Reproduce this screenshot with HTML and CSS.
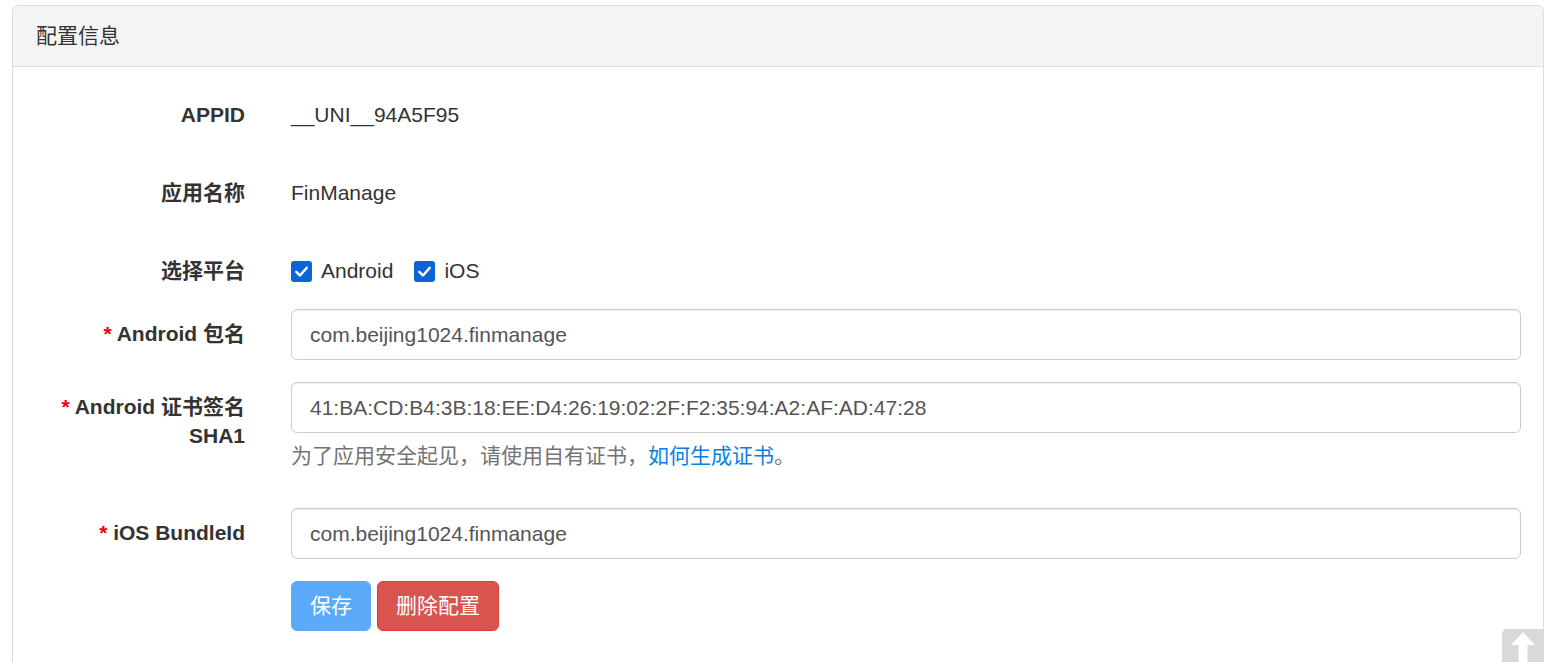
FILE: index.html
```html
<!DOCTYPE html>
<html lang="zh-CN">
<head>
<meta charset="utf-8">
<title>配置信息</title>
<link rel="stylesheet" href="styles.css">
</head>
<body>
<div class="panel">
  <div class="panel-heading">配置信息</div>
  <div class="panel-body">
    <div class="row static">
      <div class="label">APPID</div>
      <div class="control"><span class="static-text">__UNI__94A5F95</span></div>
    </div>
    <div class="row static">
      <div class="label">应用名称</div>
      <div class="control"><span class="static-text">FinManage</span></div>
    </div>
    <div class="row check-row">
      <div class="label">选择平台</div>
      <div class="control checks">
        <label class="check"><span class="box"><svg viewBox="0 0 20 20" width="20" height="20"><path d="M4.5 10.5 L8.3 14.2 L15.5 6.2" fill="none" stroke="#fff" stroke-width="2.6" stroke-linecap="round" stroke-linejoin="round"/></svg></span>Android</label>
        <label class="check"><span class="box"><svg viewBox="0 0 20 20" width="20" height="20"><path d="M4.5 10.5 L8.3 14.2 L15.5 6.2" fill="none" stroke="#fff" stroke-width="2.6" stroke-linecap="round" stroke-linejoin="round"/></svg></span>iOS</label>
      </div>
    </div>
    <div class="row input-row">
      <div class="label"><span class="req">*</span> Android 包名</div>
      <div class="control"><div class="input">com.beijing1024.finmanage</div></div>
    </div>
    <div class="row input-row">
      <div class="label"><span class="req">*</span> Android 证书签名<br>SHA1</div>
      <div class="control">
        <div class="input">41:BA:CD:B4:3B:18:EE:D4:26:19:02:2F:F2:35:94:A2:AF:AD:47:28</div>
        <div class="help">为了应用安全起见，请使用自有证书，<a class="link">如何生成证书</a>。</div>
      </div>
    </div>
    <div class="row input-row">
      <div class="label"><span class="req">*</span> iOS BundleId</div>
      <div class="control"><div class="input">com.beijing1024.finmanage</div></div>
    </div>
    <div class="row buttons-row">
      <div class="label"></div>
      <div class="control buttons">
        <button class="btn btn-save">保存</button>
        <button class="btn btn-danger">删除配置</button>
      </div>
    </div>
  </div>
</div>
<div class="to-top">
  <svg viewBox="0 0 42 34" width="42" height="34"><path d="M21 3 L33 16 L25.5 16 L25.5 34 L16.5 34 L16.5 16 L9 16 Z" fill="#fff"/></svg>
</div>
</body>
</html>
```
FILE: styles.css
```css
html, body {
  margin: 0;
  padding: 0;
  background: #fff;
  overflow: hidden;
}
body {
  font-family: "Liberation Sans", Arial, "Noto Sans CJK SC", sans-serif;
  font-size: 21px;
  color: #333;
  height: 662px;
}
.panel {
  margin: 5px 0 0 12px;
  width: 1532px;
  box-sizing: border-box;
  border: 1px solid #ddd;
  border-radius: 6px 6px 0 0;
  border-bottom: none;
  height: 657px;
}
.panel-heading {
  background: #f4f4f4;
  border-bottom: 1px solid #ddd;
  border-radius: 6px 6px 0 0;
  height: 60px;
  line-height: 60px;
  padding-left: 23px;
  font-size: 21px;
  color: #333;
}
.panel-body {
  padding-top: 22px;
}
.row {
  display: grid;
  grid-template-columns: 232px 1230px;
  column-gap: 46px;
}
.label {
  text-align: right;
  font-weight: bold;
  line-height: 30px;
  color: #333;
}
.control {
  line-height: 30px;
}
.req {
  color: #e00;
}
.row.static {
  height: 51px;
  margin-bottom: 27px;
}
.row.static .label,
.row.static .control {
  padding-top: 11px;
}
.row.check-row {
  height: 51px;
  margin-bottom: 13px;
}
.row.check-row .label,
.row.check-row .control {
  padding-top: 11px;
}
.checks {
  display: flex;
  align-items: flex-start;
  gap: 21px;
  height: 30px;
}
.check {
  display: flex;
  align-items: center;
  gap: 9px;
  line-height: 30px;
}
.box {
  width: 21px;
  height: 21px;
  border-radius: 3px;
  background: #0b64d8;
  display: flex;
  align-items: center;
  justify-content: center;
}
.box svg {
  width: 19px;
  height: 19px;
}
.row.input-row {
  margin-bottom: 22px;
}
.row.input-row .label {
  padding-top: 10px;
  line-height: 29px;
}
.input {
  height: 51px;
  box-sizing: border-box;
  border: 1px solid #ccc;
  border-radius: 6px;
  box-shadow: inset 0 1px 1px rgba(0,0,0,.075);
  padding: 0 18px;
  line-height: 49px;
  color: #555;
  background: #fff;
}
.help {
  margin-top: 8px;
  line-height: 30px;
  color: #737373;
  margin-bottom: 15px;
}
.link {
  color: #0a7ee6;
  text-decoration: none;
}
.buttons {
  display: flex;
  gap: 6px;
}
.btn {
  font-family: inherit;
  font-size: 21px;
  height: 50px;
  padding: 0 18px;
  border-radius: 6px;
  color: #fff;
  line-height: 48px;
  cursor: pointer;
}
.btn-save {
  background: #5aaaf9;
  border: 1px solid #5aaaf9;
  width: 80px;
}
.btn-danger {
  background: #d9534f;
  border: 1px solid #d43f3a;
  width: 122px;
}
.to-top {
  position: fixed;
  right: 0;
  bottom: 0;
  width: 42px;
  height: 33px;
  background: #d9d9d9;
  border-radius: 5px 0 0 0;
  overflow: hidden;
}
.to-top svg {
  display: block;
}
```
